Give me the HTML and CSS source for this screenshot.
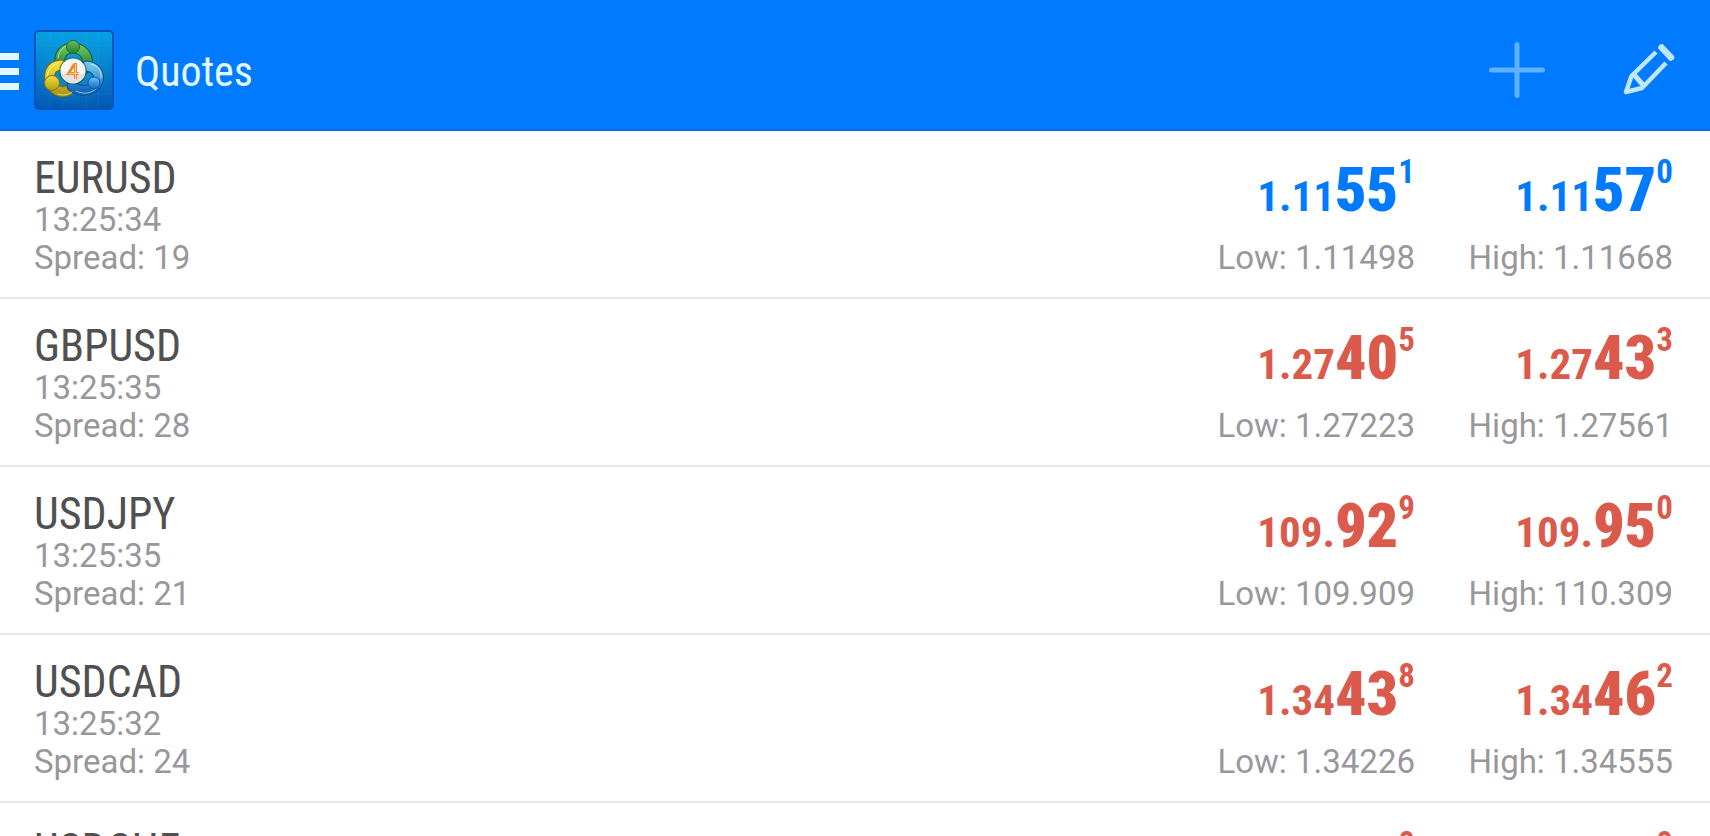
FILE: index.html
```html
<!DOCTYPE html>
<html lang="en">
<head>
<meta charset="utf-8">
<meta name="viewport" content="width=device-width, initial-scale=1">
<title>Quotes</title>
<link rel="stylesheet" href="styles.css">
</head>
<body>
<div class="app">
  <header class="bar">
    <button class="menu" type="button" aria-label="Open menu">
      <svg width="19" height="41" viewBox="0 0 19 41" aria-hidden="true"><path fill="#e4f6ff" d="M0 4h19v7H0zM0 19h19v7H0zM0 34h19v7H0z"/></svg>
    </button>
    <svg class="logo" viewBox="0 0 80 80" aria-hidden="true">
      <defs>
        <linearGradient id="sky" x1="0" y1="0" x2="0" y2="1"><stop offset="0" stop-color="#08a2e4"/><stop offset="1" stop-color="#0458b4"/></linearGradient>
        <radialGradient id="glow"><stop offset="0" stop-color="#25c3d8" stop-opacity=".5"/><stop offset="1" stop-color="#149fd2" stop-opacity="0"/></radialGradient>
        <linearGradient id="green" x1="0" y1="0" x2="0" y2="1"><stop offset="0" stop-color="#6cbc60"/><stop offset="1" stop-color="#207f32"/></linearGradient>
        <linearGradient id="yellow" x1="0" y1="0" x2="0" y2="1"><stop offset="0" stop-color="#f0e03c"/><stop offset="1" stop-color="#b29c12"/></linearGradient>
        <linearGradient id="blue" x1="0" y1="0" x2="0" y2="1"><stop offset="0" stop-color="#6cc4f2"/><stop offset="1" stop-color="#1268bc"/></linearGradient>
      </defs>
      <rect x="1" y="1" width="78" height="78" rx="4" fill="url(#sky)" stroke="#0653b4" stroke-width="2"/>
      <circle cx="40" cy="40" r="37" fill="url(#glow)"/>
      <path d="M16 2v76M28 2v76M52 2v76M64 2v76M2 16h76M2 64h76" stroke="#4cc4ec" stroke-opacity=".1"/>
      <g fill="none" stroke-linecap="round">
        <path d="M27 35C23 24 31 18 39 18s18 7 13 20" stroke="#15622c" stroke-width="11"/>
        <path d="M27 35C23 24 31 18 39 18s18 7 13 20" stroke="url(#green)" stroke-width="9"/>
        <path d="M27 35C15 36 14 46 17 53c4 10 14 11 21 5" stroke="#756a10" stroke-width="11"/>
        <path d="M27 35C15 36 14 46 17 53c4 10 14 11 21 5" stroke="url(#yellow)" stroke-width="9"/>
        <path d="M53 36c12 2 14 12 9 19-6 7-17 7-24 1" stroke="#0b4f93" stroke-width="11"/>
        <path d="M53 36c12 2 14 12 9 19-6 7-17 7-24 1" stroke="url(#blue)" stroke-width="9"/>
        <path d="M24 28c1-7 5-11 10-13" stroke="#b2e6a0" stroke-width="1"/>
        <path d="M13 46c1-6 5-11 11-13M57 34c8 2 11 8 10 14" stroke="#fffbd0" stroke-opacity=".7" stroke-width="1"/>
        <path d="M24 64c5 2 10 1 14-2M42 61c8 4 15 2 20-2" stroke="#e4f6dc" stroke-opacity=".6" stroke-width="1"/>
      </g>
      <circle cx="39" cy="17" r="6.500" fill="url(#green)" stroke="#1c7034"/>
      <circle cx="18" cy="53" r="7.500" fill="url(#yellow)" stroke="#80751a"/>
      <circle cx="60" cy="53" r="6" fill="url(#blue)" stroke="#0c5aa8"/>
      <circle cx="39" cy="41" r="14" fill="#174f38" fill-opacity=".45"/>
      <circle cx="39" cy="41" r="12.500" fill="#f8f7f5"/>
      <path d="M27 44a12.500 12.500 0 0 0 24 0z" fill="#e2e2e2"/>
      <path d="M40.500 34l-6 9.500h10M41.500 33v16" fill="none" stroke="#f08a28" stroke-width="3"/>
      <path d="M41.500 34v15M35 43.500h9" fill="none" stroke="#fbd2a8" stroke-width="1"/>
    </svg>
    <h1 class="title">Quotes</h1>
    <button class="action" type="button" aria-label="Add symbol">
      <svg width="56" height="56" viewBox="0 0 56 56" aria-hidden="true"><path d="M28 2.500v51M2.500 28h51" fill="none" stroke="#61b1ff" stroke-width="5" stroke-linecap="round"/></svg>
    </button>
    <button class="action" type="button" aria-label="Edit list">
      <svg width="56" height="56" viewBox="0 0 56 56" fill="none" stroke="#bfe6ff" stroke-width="4.500" aria-hidden="true"><path d="M35 10 10.500 34 5 50l16-4 24-25" stroke-linejoin="round"/><path d="M12.500 32l10 11.500" stroke-width="5"/><path d="M40.500 5.500l9.500 10" stroke-width="6.500" stroke-linecap="round"/></svg>
    </button>
  </header>
  <main>
    <ul class="quotes">
      <li class="quote up">
        <div class="info"><h2 class="name">EURUSD</h2><p>13:25:34</p><p>Spread: 19</p></div>
        <div class="side"><div class="price"><span>1.11</span><b>55</b><sup>1</sup></div><p>Low: 1.11498</p></div>
        <div class="side"><div class="price"><span>1.11</span><b>57</b><sup>0</sup></div><p>High: 1.11668</p></div>
      </li>
      <li class="quote">
        <div class="info"><h2 class="name">GBPUSD</h2><p>13:25:35</p><p>Spread: 28</p></div>
        <div class="side"><div class="price"><span>1.27</span><b>40</b><sup>5</sup></div><p>Low: 1.27223</p></div>
        <div class="side"><div class="price"><span>1.27</span><b>43</b><sup>3</sup></div><p>High: 1.27561</p></div>
      </li>
      <li class="quote">
        <div class="info"><h2 class="name">USDJPY</h2><p>13:25:35</p><p>Spread: 21</p></div>
        <div class="side"><div class="price"><span>109.</span><b>92</b><sup>9</sup></div><p>Low: 109.909</p></div>
        <div class="side"><div class="price"><span>109.</span><b>95</b><sup>0</sup></div><p>High: 110.309</p></div>
      </li>
      <li class="quote">
        <div class="info"><h2 class="name">USDCAD</h2><p>13:25:32</p><p>Spread: 24</p></div>
        <div class="side"><div class="price"><span>1.34</span><b>43</b><sup>8</sup></div><p>Low: 1.34226</p></div>
        <div class="side"><div class="price"><span>1.34</span><b>46</b><sup>2</sup></div><p>High: 1.34555</p></div>
      </li>
      <li class="quote">
        <div class="info"><h2 class="name">USDCHF</h2></div>
        <div class="side"><div class="price"><sup>0</sup></div></div>
        <div class="side"><div class="price"><sup>0</sup></div></div>
      </li>
    </ul>
  </main>
</div>
</body>
</html>
```
FILE: styles.css
```css
* { box-sizing: border-box; }
body, h1, h2, p, ul { margin: 0; padding: 0; }
body { background: #fff; font-family: Roboto, "Liberation Sans", sans-serif; }

.app { height: 100vh; display: flex; flex-direction: column; overflow: hidden; }
main { flex: 1; min-height: 0; overflow: hidden; }

.bar {
  display: flex;
  align-items: center;
  padding: 10px 33px 0 0;
  height: 131px;
  background: #007aff;
  border-bottom: 2px solid #0a6ddc;
}
.menu, .action { display: flex; padding: 0; border: 0; background: none; cursor: pointer; }
.logo { width: 80px; height: 80px; margin-left: 15px; }
.title {
  flex: 1;
  margin-left: 21px;
  padding-top: 4px;
  color: #e4f8ff;
  font: 400 42px/56px "Roboto Condensed", "Liberation Sans Narrow", Roboto, sans-serif;
}
.action + .action { margin-left: 76px; }

.quotes { list-style: none; }
.quote {
  display: flex;
  padding: 24px 37px 20px 34px;
  border-bottom: 2px solid #e6e6e6;
  color: #db5a4b;
}
.up { color: #007aff; }
.info { flex: 1; }
.name {
  color: #505050;
  font: 400 44px/46px "Roboto Condensed", "Liberation Sans Narrow", Roboto, sans-serif;
}
.quote p { color: #98989c; font-size: 33px; line-height: 38px; white-space: nowrap; }
.side { width: 258px; text-align: right; }
.price {
  display: flex;
  justify-content: flex-end;
  align-items: baseline;
  height: 70px;
  margin-bottom: 14px;
  font: 700 43px/44px "Roboto Condensed", "Liberation Sans Narrow", Roboto, sans-serif;
}
.price b { font-size: 62px; line-height: 70px; }
.price sup { align-self: flex-start; font-size: 33px; line-height: 34px; }
```
